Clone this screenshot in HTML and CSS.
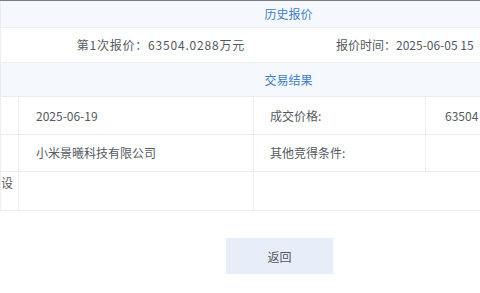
FILE: index.html
```html
<!DOCTYPE html>
<html lang="zh-CN">
  <head>
    <meta charset="UTF-8" />
    <meta name="viewport" content="width=device-width, initial-scale=1.0" />
    <title>交易结果</title>
    <link rel="stylesheet" href="styles.css">
  </head>
  <body>
    <div class="frame">
      <table class="detail">
        <colgroup>
          <col class="c-label">
          <col class="c-value">
          <col class="c-label2">
          <col class="c-value2">
        </colgroup>
        <tr class="section first">
          <td colspan="4">历史报价</td>
        </tr>
        <tr class="bid">
          <td colspan="4">
            <div class="bid-line">
              <span class="bid-price">第1次报价：63504.0288万元</span>
              <span>报价时间：2025-06-05 15</span>
            </div>
          </td>
        </tr>
        <tr class="section">
          <td colspan="4">交易结果</td>
        </tr>
        <tr class="row-a">
          <td class="label"></td>
          <td class="value">2025-06-19</td>
          <td class="label2">成交价格:</td>
          <td class="value">63504</td>
        </tr>
        <tr class="row-b">
          <td class="label"></td>
          <td class="value">小米景曦科技有限公司</td>
          <td class="label2">其他竞得条件:</td>
          <td class="value"></td>
        </tr>
        <tr class="row-c">
          <td class="label top">设</td>
          <td class="value"></td>
          <td class="value" colspan="2"></td>
        </tr>
      </table>
    </div>
    <div class="actions">
      <button class="back">返回</button>
    </div>
  </body>
</html>
```

FILE: styles.css
```css
body {
  margin: 0;
  background: #ffffff;
  font-family: "Noto Sans CJK SC", "Noto Sans", sans-serif;
  font-size: 12px;
  color: #555a62;
  overflow: hidden;
  width: 480px;
}

.frame {
  width: 480px;
  overflow: hidden;
  border-top: 1px solid #7a7d82;
}

.detail {
  width: 576px;
  border-collapse: collapse;
  table-layout: fixed;
}

.c-label { width: 18px; }
.c-value { width: 235px; }
.c-label2 { width: 172px; }
.c-value2 { width: 151px; }

.detail td {
  border: 1px solid #eaedf1;
  padding: 0;
  line-height: 16px;
}

.section td {
  background: #f5f8fc;
  color: #3f7fd6;
  text-align: center;
  height: 33px;
}

.section.first td {
  height: 26px;
  border-top: none;
}

.bid td {
  height: 34px;
}

.bid-line {
  display: grid;
  grid-template-columns: 244px 1fr;
  column-gap: 91px;
  white-space: nowrap;
}

.bid-price {
  justify-self: end;
  letter-spacing: 0.8px;
}

.row-a td { height: 37px; }
.row-b td { height: 36px; }
.row-c td { height: 35px; }

.label {
  white-space: nowrap;
  overflow: hidden;
  text-align: left;
}

.label.top {
  vertical-align: top;
  padding-top: 3px;
}

.value {
  padding-left: 17px !important;
  white-space: nowrap;
  overflow: hidden;
}

.label2 {
  padding-left: 16px !important;
  white-space: nowrap;
}

.row-a .value:last-child {
  padding-left: 19px !important;
}

.actions {
  display: flex;
  justify-content: center;
  padding-top: 27px;
  padding-left: 79px;
}

.back {
  width: 107px;
  height: 36px;
  border: none;
  background: #e8eef9;
  color: #555a62;
  font-family: inherit;
  font-size: 12px;
  cursor: pointer;
}
```
